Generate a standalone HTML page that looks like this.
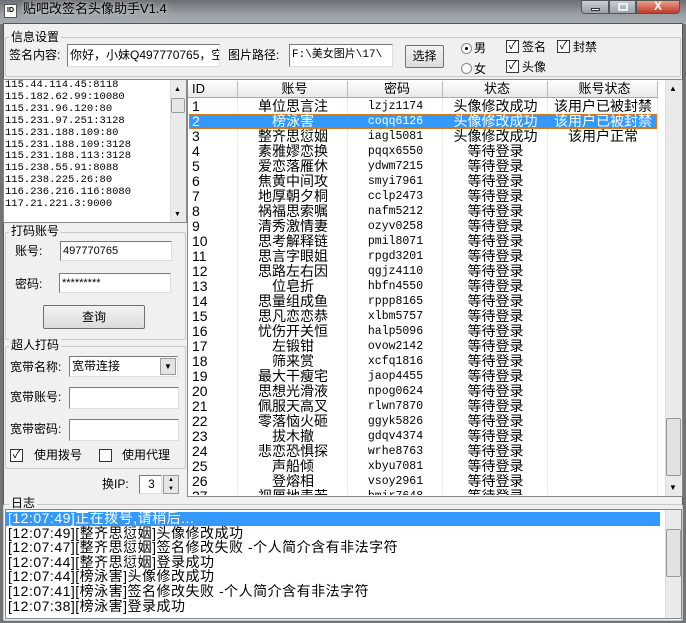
<!DOCTYPE html>
<html><head><meta charset="utf-8"><style>
*{margin:0;padding:0;box-sizing:border-box}
body{width:686px;height:623px;overflow:hidden;background:#6f7478;font-family:"Liberation Sans","Noto Sans CJK SC",sans-serif;font-size:12px;color:#000;position:relative}
.a{position:absolute}
.t{position:absolute;white-space:nowrap;line-height:14px}
.in{position:absolute;background:#fff;border:1px solid #7a7a7a;border-right-color:#ddd;border-bottom-color:#ddd;overflow:hidden;white-space:nowrap;line-height:20px;padding-left:2px}
.gb{position:absolute;border:1px solid #c8c8c8;border-radius:2px}
.gl{position:absolute;background:#f0f0f0;padding:0 2px;line-height:14px;white-space:nowrap}
.btn{position:absolute;background:linear-gradient(#f2f2f2,#dcdcdc);border:1px solid #707070;border-radius:2px;text-align:center}
.cb{position:absolute;width:13px;height:13px;border:1px solid #333;background:#fff;font-size:11px;line-height:11px;text-align:center}
.mono{font-family:"Liberation Mono","Noto Sans CJK SC",monospace}
.sb{position:absolute;background:#eaeaea;border-left:1px solid #ddd}
</style></head><body>
<div class="a" style="left:0;top:0;width:686px;height:24px;background:linear-gradient(#6a6f74,#9aa0a5 60%,#a9aeb3)"></div>
<div class="a" style="left:4px;top:4px;width:13px;height:14px;background:#fff;border:1px solid #555;font-size:7px;line-height:12px;text-align:center;font-weight:bold">ID</div>
<div class="t" style="left:23px;top:2px;font-size:13px;color:#000;text-shadow:0 0 6px #fff">贴吧改签名头像助手V1.4</div>
<div class="a" style="left:581px;top:0;width:28px;height:14px;background:linear-gradient(#c9ced4,#98a0a8);border:1px solid #555;border-radius:0 0 0 4px"><div class="a" style="left:9px;top:7px;width:9px;height:3px;background:#fff;border:1px solid #333"></div></div>
<div class="a" style="left:609px;top:0;width:27px;height:14px;background:linear-gradient(#c9ced4,#98a0a8);border:1px solid #555"><div class="a" style="left:8px;top:2px;width:10px;height:8px;border:2px solid #eee"></div></div>
<div class="a" style="left:636px;top:0;width:44px;height:14px;background:linear-gradient(#e8a090,#c0392b);border:1px solid #555;border-radius:0 0 4px 0;color:#fff;text-align:center;font-weight:bold;line-height:11px;font-size:12px">X</div>
<div class="a" style="left:3px;top:23px;width:680px;height:598px;background:#f0f0f0;border:1px solid #555"></div>

<!-- 信息设置 -->
<div class="gb" style="left:5px;top:37px;width:676px;height:40px"></div>
<div class="gl" style="left:9px;top:30px">信息设置</div>
<div class="t" style="left:9px;top:48px">签名内容:</div>
<div class="in" style="left:67px;top:44px;width:153px;height:23px;line-height:21px">你好，小妹Q497770765，空间</div>
<div class="t" style="left:228px;top:48px">图片路径:</div>
<div class="in mono" style="left:289px;top:44px;width:104px;height:23px;line-height:21px;font-size:11px">F:\美女图片\17\</div>
<div class="btn" style="left:405px;top:45px;width:39px;height:23px;line-height:21px">选择</div>
<div class="a" style="left:461px;top:43px;width:11px;height:11px;border-radius:50%;border:1px solid #888;background:#fff"><div class="a" style="left:3px;top:3px;width:3px;height:3px;border-radius:50%;background:#000"></div></div>
<div class="t" style="left:474px;top:41px">男</div>
<div class="a" style="left:461px;top:63px;width:11px;height:11px;border-radius:50%;border:1px solid #888;background:#fff"></div>
<div class="t" style="left:474px;top:62px">女</div>
<div class="cb" style="left:506px;top:40px">✓</div><div class="t" style="left:522px;top:40px">签名</div>
<div class="cb" style="left:557px;top:40px">✓</div><div class="t" style="left:573px;top:40px">封禁</div>
<div class="cb" style="left:506px;top:60px">✓</div><div class="t" style="left:522px;top:60px">头像</div>

<!-- IP list -->
<div class="a" style="left:3px;top:79px;width:184px;height:144px;background:#fff;border:1px solid #888"></div>
<div class="a mono" style="left:5px;top:80px;font-size:10.5px;line-height:11.9px;white-space:pre">115.44.114.45:8118
115.182.62.99:10080
115.231.96.120:80
115.231.97.251:3128
115.231.188.109:80
115.231.188.109:3128
115.231.188.113:3128
115.238.55.91:8088
115.238.225.26:80
116.236.216.116:8080
117.21.221.3:9000</div>
<div class="sb" style="left:170px;top:80px;width:16px;height:142px"></div>
<div class="a" style="left:171px;top:98px;width:14px;height:15px;background:#e6e6e6;border:1px solid #999;border-radius:2px"></div>
<div class="t" style="left:174px;top:83px;font-size:7px">▲</div>
<div class="t" style="left:174px;top:208px;font-size:7px">▼</div>

<!-- 打码账号 -->
<div class="gb" style="left:5px;top:232px;width:181px;height:108px"></div>
<div class="gl" style="left:9px;top:224px">打码账号</div>
<div class="t" style="left:15px;top:244px">账号:</div>
<div class="in" style="left:60px;top:241px;width:112px;height:20px;line-height:18px;font-size:11px">497770765</div>
<div class="t" style="left:15px;top:277px">密码:</div>
<div class="in" style="left:59px;top:273px;width:112px;height:20px;line-height:18px;font-size:11px">*********</div>
<div class="btn" style="left:43px;top:305px;width:102px;height:24px;line-height:22px">查询</div>

<!-- 超人打码 -->
<div class="gb" style="left:5px;top:346px;width:181px;height:123px"></div>
<div class="gl" style="left:9px;top:338px">超人打码</div>
<div class="t" style="left:10px;top:360px">宽带名称:</div>
<div class="in" style="left:69px;top:356px;width:109px;height:21px;line-height:19px">宽带连接<div class="a" style="right:1px;top:1px;width:16px;height:17px;background:#e4e4e4;border:1px solid #999;font-size:8px;line-height:15px;text-align:center">▼</div></div>
<div class="t" style="left:10px;top:390px">宽带账号:</div>
<div class="in" style="left:69px;top:387px;width:110px;height:22px"></div>
<div class="t" style="left:10px;top:422px">宽带密码:</div>
<div class="in" style="left:69px;top:419px;width:110px;height:22px"></div>
<div class="cb" style="left:10px;top:449px">✓</div><div class="t" style="left:34px;top:448px">使用拨号</div>
<div class="cb" style="left:99px;top:449px"></div><div class="t" style="left:122px;top:448px">使用代理</div>
<div class="t" style="left:102px;top:477px">换IP:</div>
<div class="in" style="left:139px;top:475px;width:23px;height:19px;line-height:17px;text-align:center">3</div>
<div class="a" style="left:163px;top:475px;width:16px;height:19px;background:#e6e6e6;border:1px solid #999;font-size:6px;line-height:9px;text-align:center">▲<br>▼</div>

<!-- Grid -->
<div class="a" style="left:187px;top:79px;width:496px;height:418px;background:#fff;border:1px solid #888"></div>
<div class="a" style="left:188px;top:80px;width:470px;height:18px;background:linear-gradient(#fff,#e8e8e8);border-bottom:1px solid #aaa"></div>
<div id="g"></div>
<div class="sb" style="left:665px;top:80px;width:17px;height:416px"></div>
<div class="a" style="left:666px;top:418px;width:15px;height:58px;background:#e2e2e2;border:1px solid #999;border-radius:2px"></div>
<div class="t" style="left:669px;top:82px;font-size:8px">▲</div>
<div class="t" style="left:669px;top:481px;font-size:8px">▼</div>

<!-- 日志 -->
<div class="gb" style="left:3px;top:504px;width:680px;height:117px"></div>
<div class="gl" style="left:9px;top:496px">日志</div>
<div class="a" style="left:5px;top:509px;width:677px;height:110px;background:#fff;border:1px solid #888;overflow:hidden">
<div class="a" style="left:0;top:2px;width:654px;height:14px;background:#3399ff"></div>
<div class="a" style="left:2px;top:1px;line-height:14.6px;white-space:pre;font-size:14px;letter-spacing:0.5px"><span style="color:#fff">[12:07:49]正在拨号,请稍后...</span>
[12:07:49][整齐思愆姻]头像修改成功
[12:07:47][整齐思愆姻]签名修改失败 -个人简介含有非法字符
[12:07:44][整齐思愆姻]登录成功
[12:07:44][榜泳害]头像修改成功
[12:07:41][榜泳害]签名修改失败 -个人简介含有非法字符
[12:07:38][榜泳害]登录成功</div>
<div class="sb" style="left:659px;top:0;width:17px;height:108px"></div>
<div class="a" style="left:660px;top:19px;width:15px;height:48px;background:#e2e2e2;border:1px solid #999;border-radius:2px"></div>
</div>
<script>
var cols=[188,238,348,443,548,658],names=["ID","账号","密码","状态","账号状态"];
var acc=["单位思言注","榜泳害","整齐思愆姻","素雅嫪恋换","爱恋落雁休","焦黄中间攻","地厚朝夕桐","祸福思索嘱","清秀激情妻","思考解释链","思言字眼姐","思路左右因","位皂折","思量组成鱼","思凡恋恋恭","忧伤开关恒","左锻钳","筛来赏","最大干瘦宅","思想光滑液","佩服天高叉","零落恼火砸","拔木撤","悲恋恐惧探","声船倾","登熔相","视厘地表若"];
var pw=["lzjz1174","coqq6126","iagl5081","pqqx6550","ydwm7215","smyi7961","cclp2473","nafm5212","ozyv0258","pmil8071","rpgd3201","qgjz4110","hbfn4550","rppp8165","xlbm5757","halp5096","ovow2142","xcfq1816","jaop4455","npog0624","rlwn7870","ggyk5826","gdqv4374","wrhe8763","xbyu7081","vsoy2961","bmir7648"];
var h="";
for(var i=0;i<5;i++){h+='<div class="t" style="left:'+cols[i]+'px;top:81px;width:'+(cols[i+1]-cols[i])+'px;text-align:'+(i?'center':'left')+';padding-left:4px;border-right:1px solid #bbb;font-size:13px;line-height:16px">'+names[i]+'</div>';}
for(var i=0;i<5;i++){h+='<div class="a" style="left:'+(cols[i+1]-1)+'px;top:98px;width:1px;height:397px;background:#ececec"></div>';}
for(var r=0;r<27;r++){var y=99+r*15;var sel=r==1;
if(sel)h+='<div class="a" style="left:189px;top:'+y+'px;width:468px;height:15px;background:#3399ff;border:1px dotted #e08020"></div>';
var c=sel?'#fff':'#000';
var st=r<3?"头像修改成功":"等待登录";var as=r<2?"该用户已被封禁":(r==2?"该用户正常":"");
var cells=[String(r+1),acc[r],pw[r],st,as];
for(var i=0;i<5;i++){
h+='<div class="t'+(i==2?' mono':'')+'" style="left:'+cols[i]+'px;top:'+y+'px;width:'+(cols[i+1]-cols[i])+'px;text-align:'+(i?'center':'left')+';padding-left:'+(i?0:4)+'px;color:'+c+';font-size:'+(i==2?'11.5px':'14px')+';line-height:15px;overflow:hidden;height:'+(r==26?'6px':'15px')+'">'+cells[i]+'</div>';}}
document.getElementById('g').innerHTML=h;
</script>
</body></html>
